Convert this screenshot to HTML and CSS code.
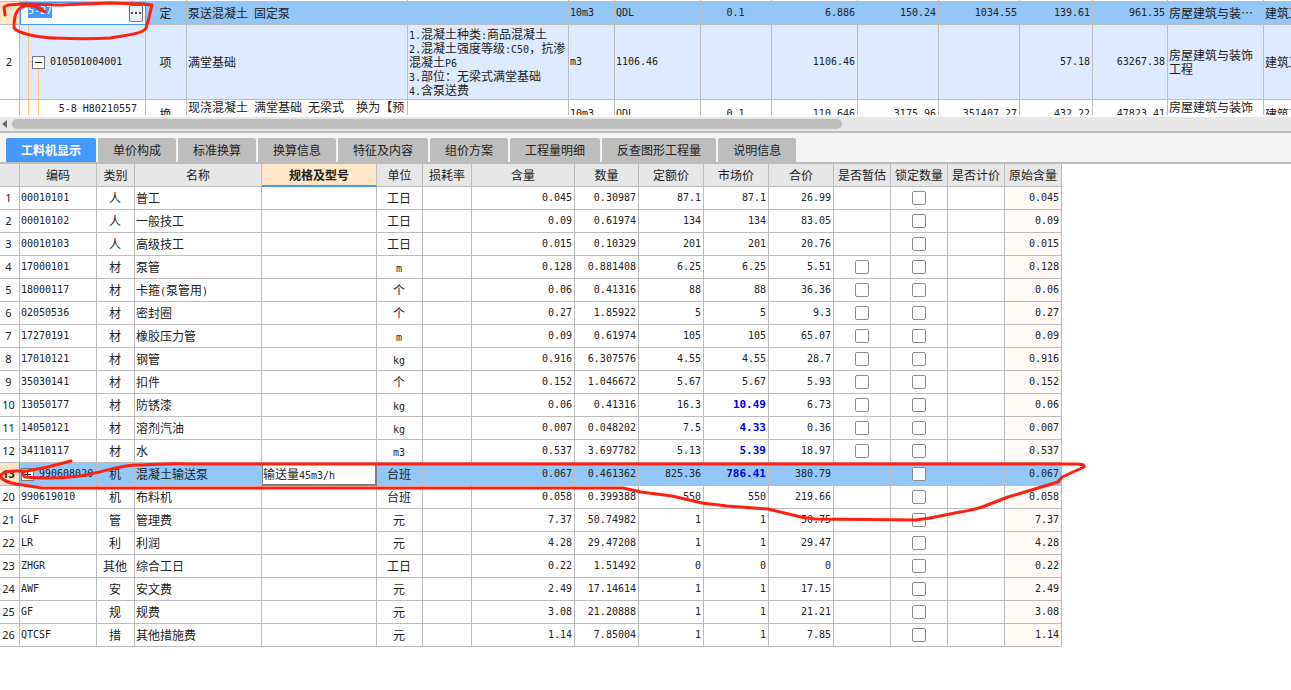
FILE: index.html
```html
<!DOCTYPE html>
<html lang="zh-CN">
<head>
<meta charset="utf-8">
<title>工料机显示</title>
<link rel="stylesheet" href="styles.css">
</head>
<body>
<main class="app">
<section class="bill">
<table class="grid bill-grid">
<colgroup><col class="w20"><col class="w126"><col class="w41"><col class="w221"><col class="w161"><col class="w46"><col class="w86"><col class="w71"><col class="w86"><col class="w81"><col class="w81"><col class="w73"><col class="w75"><col class="w96"><col class="w96"></colgroup>
<tbody>
<tr class="sliver"><td></td><td></td><td></td><td></td><td></td><td></td><td></td><td></td><td></td><td></td><td></td><td></td><td></td><td></td><td></td></tr>
<tr class="current"><td class="mark"></td><td class="edit-cell"><div class="editor"><input class="code-input mono" type="text" value="5-27" aria-label="编码"><button class="more" type="button" aria-label="更多"><i></i><i></i><i></i></button></div></td><td class="c">定</td><td>泵送混凝土<span class="mono"> </span>固定泵</td><td></td><td class="mono">10m3</td><td class="mono">QDL</td><td class="mono c">0.1</td><td class="mono r">6.886</td><td class="mono r">150.24</td><td class="mono r">1034.55</td><td class="mono r">139.61</td><td class="mono r">961.35</td><td class="clip">房屋建筑与装⋯</td><td class="clip">建筑工程</td></tr>
<tr class="item"><td class="num">2</td><td class="tree"><div class="node"><button class="toggle" type="button" aria-label="折叠"></button><span class="mono">010501004001</span></div></td><td class="c">项</td><td>满堂基础</td><td class="feature"><span class="mono">1.</span>混凝土种类<span class="mono">:</span>商品混凝土<br><span class="mono">2.</span>混凝土强度等级<span class="mono">:C50</span>，抗渗<br>混凝土<span class="mono">P6</span><br><span class="mono">3.</span>部位：无梁式满堂基础<br><span class="mono">4.</span>含泵送费</td><td class="mono">m3</td><td class="mono">1106.46</td><td></td><td class="mono r">1106.46</td><td></td><td></td><td class="mono r">57.18</td><td class="mono r">63267.38</td><td>房屋建筑与装饰工程</td><td class="clip">建筑工程</td></tr>
<tr class="next"><td></td><td class="tree deep"><span class="mono">5-8 H80210557</span></td><td class="c">换</td><td>现浇混凝土<span class="mono"> </span>满堂基础<span class="mono"> </span>无梁式<span class="mono">&nbsp; </span>换为【预拌混凝土】</td><td></td><td class="mono">10m3</td><td class="mono">QDL</td><td class="mono c">0.1</td><td class="mono r">110.646</td><td class="mono r">3175.96</td><td class="mono r">351407.27</td><td class="mono r">432.22</td><td class="mono r">47823.41</td><td>房屋建筑与装饰工程</td><td class="clip">建筑工程</td></tr>
</tbody>
</table>
</section>
<div class="scrollbar"><span class="arrow"></span><span class="thumb"></span></div>
<nav class="tabs">
<button class="tab active" type="button">工料机显示</button><button class="tab" type="button">单价构成</button><button class="tab" type="button">标准换算</button><button class="tab" type="button">换算信息</button><button class="tab" type="button">特征及内容</button><button class="tab" type="button">组价方案</button><button class="tab" type="button">工程量明细</button><button class="tab" type="button">反查图形工程量</button><button class="tab" type="button">说明信息</button>
</nav>
<table class="grid res">
<colgroup><col class="w20"><col class="w77"><col class="w38"><col class="w127"><col class="w115"><col class="w46"><col class="w49"><col class="w103"><col class="w64"><col class="w65"><col class="w65"><col class="w65"><col class="w57"><col class="w57"><col class="w57"><col class="w57"></colgroup>
<thead><tr><th></th><th>编码</th><th>类别</th><th>名称</th><th class="picked">规格及型号</th><th>单位</th><th>损耗率</th><th>含量</th><th>数量</th><th>定额价</th><th>市场价</th><th>合价</th><th>是否暂估</th><th>锁定数量</th><th>是否计价</th><th>原始含量</th></tr></thead>
<tbody>
<tr><td>1</td><td>00010101</td><td>人</td><td>普工</td><td></td><td>工日</td><td></td><td>0.045</td><td>0.30987</td><td>87.1</td><td>87.1</td><td>26.99</td><td></td><td><input type="checkbox" aria-label="锁定数量"></td><td></td><td>0.045</td></tr>
<tr><td>2</td><td>00010102</td><td>人</td><td>一般技工</td><td></td><td>工日</td><td></td><td>0.09</td><td>0.61974</td><td>134</td><td>134</td><td>83.05</td><td></td><td><input type="checkbox" aria-label="锁定数量"></td><td></td><td>0.09</td></tr>
<tr><td>3</td><td>00010103</td><td>人</td><td>高级技工</td><td></td><td>工日</td><td></td><td>0.015</td><td>0.10329</td><td>201</td><td>201</td><td>20.76</td><td></td><td><input type="checkbox" aria-label="锁定数量"></td><td></td><td>0.015</td></tr>
<tr><td>4</td><td>17000101</td><td>材</td><td>泵管</td><td></td><td><span class="mono">m</span></td><td></td><td>0.128</td><td>0.881408</td><td>6.25</td><td>6.25</td><td>5.51</td><td><input type="checkbox" aria-label="是否暂估"></td><td><input type="checkbox" aria-label="锁定数量"></td><td></td><td>0.128</td></tr>
<tr><td>5</td><td>18000117</td><td>材</td><td>卡箍<span class="mono">(</span>泵管用<span class="mono">)</span></td><td></td><td>个</td><td></td><td>0.06</td><td>0.41316</td><td>88</td><td>88</td><td>36.36</td><td><input type="checkbox" aria-label="是否暂估"></td><td><input type="checkbox" aria-label="锁定数量"></td><td></td><td>0.06</td></tr>
<tr><td>6</td><td>02050536</td><td>材</td><td>密封圈</td><td></td><td>个</td><td></td><td>0.27</td><td>1.85922</td><td>5</td><td>5</td><td>9.3</td><td><input type="checkbox" aria-label="是否暂估"></td><td><input type="checkbox" aria-label="锁定数量"></td><td></td><td>0.27</td></tr>
<tr><td>7</td><td>17270191</td><td>材</td><td>橡胶压力管</td><td></td><td><span class="mono">m</span></td><td></td><td>0.09</td><td>0.61974</td><td>105</td><td>105</td><td>65.07</td><td><input type="checkbox" aria-label="是否暂估"></td><td><input type="checkbox" aria-label="锁定数量"></td><td></td><td>0.09</td></tr>
<tr><td>8</td><td>17010121</td><td>材</td><td>钢管</td><td></td><td><span class="mono">kg</span></td><td></td><td>0.916</td><td>6.307576</td><td>4.55</td><td>4.55</td><td>28.7</td><td><input type="checkbox" aria-label="是否暂估"></td><td><input type="checkbox" aria-label="锁定数量"></td><td></td><td>0.916</td></tr>
<tr><td>9</td><td>35030141</td><td>材</td><td>扣件</td><td></td><td>个</td><td></td><td>0.152</td><td>1.046672</td><td>5.67</td><td>5.67</td><td>5.93</td><td><input type="checkbox" aria-label="是否暂估"></td><td><input type="checkbox" aria-label="锁定数量"></td><td></td><td>0.152</td></tr>
<tr><td>10</td><td>13050177</td><td>材</td><td>防锈漆</td><td></td><td><span class="mono">kg</span></td><td></td><td>0.06</td><td>0.41316</td><td>16.3</td><td><b>10.49</b></td><td>6.73</td><td><input type="checkbox" aria-label="是否暂估"></td><td><input type="checkbox" aria-label="锁定数量"></td><td></td><td>0.06</td></tr>
<tr><td>11</td><td>14050121</td><td>材</td><td>溶剂汽油</td><td></td><td><span class="mono">kg</span></td><td></td><td>0.007</td><td>0.048202</td><td>7.5</td><td><b>4.33</b></td><td>0.36</td><td><input type="checkbox" aria-label="是否暂估"></td><td><input type="checkbox" aria-label="锁定数量"></td><td></td><td>0.007</td></tr>
<tr><td>12</td><td>34110117</td><td>材</td><td>水</td><td></td><td><span class="mono">m3</span></td><td></td><td>0.537</td><td>3.697782</td><td>5.13</td><td><b>5.39</b></td><td>18.97</td><td><input type="checkbox" aria-label="是否暂估"></td><td><input type="checkbox" aria-label="锁定数量"></td><td></td><td>0.537</td></tr>
<tr class="selected"><td>13</td><td><div class="node"><button class="toggle plus" type="button" aria-label="展开"></button><span>990608020</span></div></td><td>机</td><td>混凝土输送泵</td><td>输送量<span class="mono">45m3/h</span></td><td>台班</td><td></td><td>0.067</td><td>0.461362</td><td>825.36</td><td><b>786.41</b></td><td>380.79</td><td></td><td><input type="checkbox" aria-label="锁定数量"></td><td></td><td>0.067</td></tr>
<tr><td>20</td><td>990619010</td><td>机</td><td>布料机</td><td></td><td>台班</td><td></td><td>0.058</td><td>0.399388</td><td>550</td><td>550</td><td>219.66</td><td></td><td><input type="checkbox" aria-label="锁定数量"></td><td></td><td>0.058</td></tr>
<tr><td>21</td><td>GLF</td><td>管</td><td>管理费</td><td></td><td>元</td><td></td><td>7.37</td><td>50.74982</td><td>1</td><td>1</td><td>50.75</td><td></td><td><input type="checkbox" aria-label="锁定数量"></td><td></td><td>7.37</td></tr>
<tr><td>22</td><td>LR</td><td>利</td><td>利润</td><td></td><td>元</td><td></td><td>4.28</td><td>29.47208</td><td>1</td><td>1</td><td>29.47</td><td></td><td><input type="checkbox" aria-label="锁定数量"></td><td></td><td>4.28</td></tr>
<tr><td>23</td><td>ZHGR</td><td>其他</td><td>综合工日</td><td></td><td>工日</td><td></td><td>0.22</td><td>1.51492</td><td>0</td><td>0</td><td>0</td><td></td><td><input type="checkbox" aria-label="锁定数量"></td><td></td><td>0.22</td></tr>
<tr><td>24</td><td>AWF</td><td>安</td><td>安文费</td><td></td><td>元</td><td></td><td>2.49</td><td>17.14614</td><td>1</td><td>1</td><td>17.15</td><td></td><td><input type="checkbox" aria-label="锁定数量"></td><td></td><td>2.49</td></tr>
<tr><td>25</td><td>GF</td><td>规</td><td>规费</td><td></td><td>元</td><td></td><td>3.08</td><td>21.20888</td><td>1</td><td>1</td><td>21.21</td><td></td><td><input type="checkbox" aria-label="锁定数量"></td><td></td><td>3.08</td></tr>
<tr><td>26</td><td>QTCSF</td><td>措</td><td>其他措施费</td><td></td><td>元</td><td></td><td>1.14</td><td>7.85004</td><td>1</td><td>1</td><td>7.85</td><td></td><td><input type="checkbox" aria-label="锁定数量"></td><td></td><td>1.14</td></tr>
</tbody>
</table>
<svg class="ink" width="1291" height="690" viewBox="0 0 1291 690" aria-hidden="true">
<path d="M5 15L4 7L8 5L22 4L34 6L45 12M45 12C38 6 29 4 22 7C16 10 14 16 14 28C18 33 34 37 54 38C76 39 94 39 110 38C130 35 144 33 146 28C148 22 150 13 152 5L140 4L110 3L60 5L24 4"/>
<path d="M71 461L48 467L27 471C22 471 21 474 25 477C42 479 70 478 86 475C106 471 117 466 136 465C158 465 164 463 190 464L1076 464C1082 464 1085 465 1084 467L1062 477L1058 482L1008 497L990 504Q976 510 960 512L930 518L916 520L815 519L801 517L768 509L727 506L702 503L672 496L641 492L623 488L42 488L16 484C2 481 -1 477 2 474Q6 471 16 471L27 471"/>
</svg>
</main>
</body>
</html>
```

FILE: styles.css
```css
* { box-sizing: border-box; }
body { margin: 0; background: #fff; color: #222; font: 12px/14px "Noto Sans CJK SC", sans-serif; }
button, input { margin: 0; padding: 0; font: inherit; color: inherit; border: 0; }
.app { position: relative; min-height: 100vh; overflow: hidden; }
.mono { font-family: "DejaVu Sans Mono", monospace; font-size: 10px; }
span.mono { line-height: 1; white-space: pre-wrap; }
.c { text-align: center; }
.r { text-align: right; }

.grid { table-layout: fixed; border-collapse: separate; border-spacing: 0; width: 0; }
.grid td, .grid th { padding: 0 2px 0 1px; border-right: 1px solid #bdbdbd; border-bottom: 1px solid #bdbdbd; overflow: hidden; }
.w20 { width: 20px; } .w38 { width: 38px; } .w41 { width: 41px; } .w46 { width: 46px; } .w49 { width: 49px; }
.w57 { width: 57px; } .w64 { width: 64px; } .w65 { width: 65px; } .w71 { width: 71px; } .w73 { width: 73px; }
.w75 { width: 75px; } .w77 { width: 77px; } .w81 { width: 81px; } .w86 { width: 86px; } .w96 { width: 96px; }
.w103 { width: 103px; } .w115 { width: 115px; } .w126 { width: 126px; } .w127 { width: 127px; }
.w161 { width: 161px; } .w221 { width: 221px; }

/* bill of quantities */
.bill { height: 115px; overflow: hidden; }
.sliver { height: 2px; }
.current { height: 23px; background: #92c7f7; }
.item { height: 75px; background: #deeaff; }
.next { height: 29px; }
.clip { white-space: nowrap; }
.bill-grid .mark { background: #ffe6c8; }
.bill-grid .num { background: #fff; text-align: center; font: 11px/14px "Noto Sans", sans-serif; }
.bill-grid .edit-cell { padding: 0; background: #fff; border-color: #4499ff; box-shadow: inset 1px 1px #4499ff; }
.editor { display: flex; justify-content: space-between; align-items: center; height: 22px; padding: 0 2px 0 8px; }
.code-input { width: 24px; height: 16px; background: #4499ff; color: #fff; align-self: flex-start; }
.more { display: flex; justify-content: center; align-items: center; gap: 2px; width: 14px; height: 17px; border: 1px solid #777; border-radius: 2px; background: #eef0f6; }
.more i { width: 2px; height: 2px; background: #444; }
.tree { background: linear-gradient(#ffc774, #ffc774) 8px 0 / 1px 100% no-repeat, linear-gradient(#ffc774, #ffc774) 8px 36px / 5px 1px no-repeat, linear-gradient(#ffc774, #ffc774) 18px 43px / 1px 32px no-repeat; }
.deep { background: linear-gradient(#ffc774, #ffc774) 8px 0 / 1px 100% no-repeat, linear-gradient(#ffc774, #ffc774) 18px 0 / 1px 100% no-repeat; text-align: right; vertical-align: top; }
.bill-grid .deep { padding-right: 8px; }
.node { display: flex; align-items: center; gap: 5px; }
.tree .node { padding-left: 11px; }
.toggle { width: 13px; height: 13px; flex: none; border: 1px solid #777; background: linear-gradient(#222, #222) center / 7px 1px no-repeat, #fff; }
.toggle.plus { background: linear-gradient(#222, #222) center / 7px 1px no-repeat, linear-gradient(#222, #222) center / 1px 7px no-repeat, #fff; }
.feature { white-space: nowrap; }

.scrollbar { display: flex; align-items: center; gap: 5px; height: 18px; padding: 0 2px; border-top: 2px solid #fff; border-bottom: 2px solid #bdbdbd; background: #e7e7e7; }
.arrow { border: 4px solid transparent; border-left: 0; border-right: 5px solid #666670; }
.thumb { width: 830px; height: 10px; border-radius: 5px; background: #bdbdbd; }

/* detail tabs */
.tabs { display: flex; gap: 2px; height: 31px; padding: 5px 6px 0; background: #f4f4f4; border-bottom: 2px solid #bdbdbd; }
.tab { padding: 0 15px; border-radius: 2px 2px 0 0; background: #bdbdbd; white-space: nowrap; }
.tab.active { background: #4499ff; color: #fff; font-weight: 700; }

/* resources */
.res tr { height: 23px; }
.res th { background: #e7e7e7; padding: 0; font-weight: 400; white-space: nowrap; }
.res .picked { background: #ffe6c8; font-weight: 700; border-bottom: 2px solid #4499ff; }
.res td { font-family: "DejaVu Sans Mono", monospace; font-size: 10px; text-align: right; white-space: nowrap; }
.res td:nth-child(1) { padding: 0 2px 0 0; text-align: center; font: 11px/14px "Noto Sans", sans-serif; }
.res td:nth-child(2) { text-align: left; }
.res td:nth-child(3), .res td:nth-child(4), .res td:nth-child(5), .res td:nth-child(6) { font: 12px/14px "Noto Sans CJK SC", sans-serif; text-align: center; }
.res td:nth-child(4), .res td:nth-child(5) { text-align: left; }
.res td:nth-child(13), .res td:nth-child(14) { padding: 0; text-align: center; }
.res td:nth-child(16) { background: #fffaf5; }
.res b { color: #0000f0; font-size: 11px; line-height: 14px; }
.res input { appearance: none; display: block; width: 14px; height: 14px; margin: 0 auto; border: 1px solid #8c8c8c; border-radius: 2px; background: #fff; }
.res .selected td { background: #92c7f7; }
.res .selected td:nth-child(1) { background: #ffe6c8; font-weight: 700; border-right-color: #4499ff; }
.res .selected td:nth-child(5) { background: #fff; border-right: 2px solid #808080; border-bottom: 2px solid #808080; box-shadow: inset 1px 1px #808080; }

.ink { position: absolute; top: 0; left: 0; pointer-events: none; }
.ink path { fill: none; stroke: #ff2010; stroke-width: 3; stroke-linecap: round; stroke-linejoin: round; }
```
